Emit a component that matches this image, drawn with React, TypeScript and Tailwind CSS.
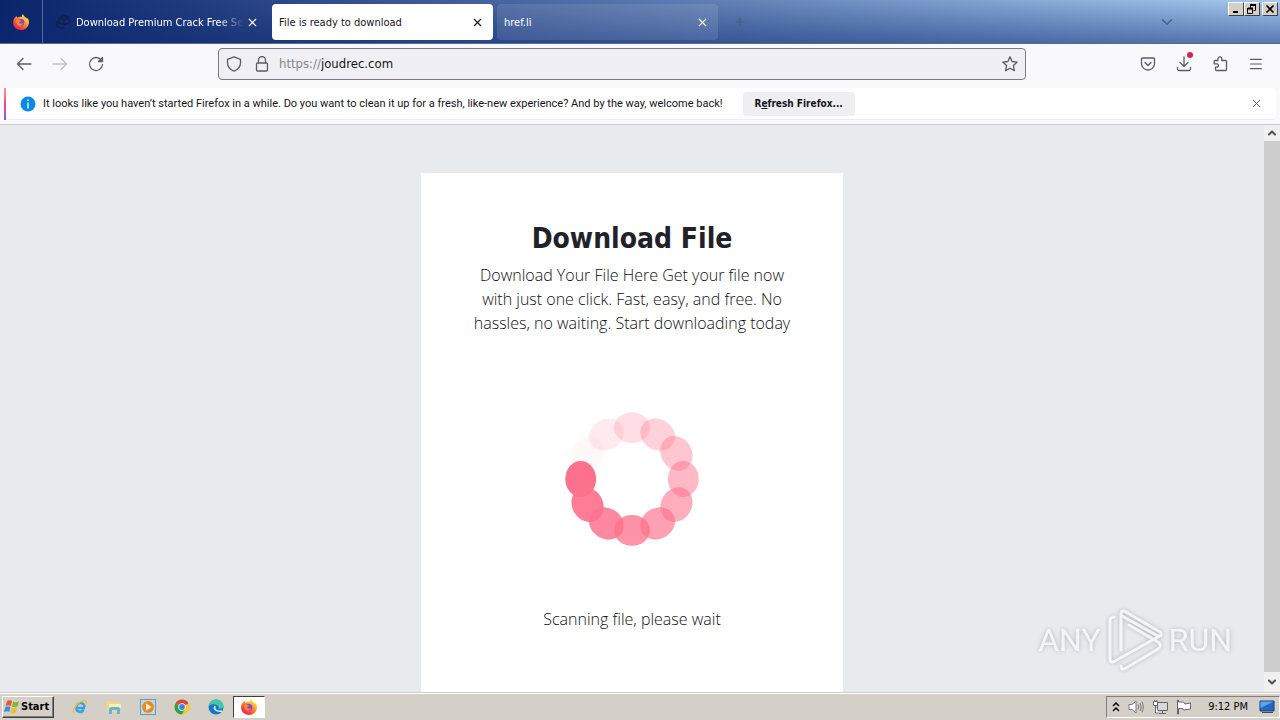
import type { ReactNode } from 'react';
import { ChevronDown, Menu, Plus, X } from 'lucide-react';

const tabs = [
  { title: 'Download Premium Crack Free Setup', favicon: true, active: false, style: 'text-white' },
  { title: 'File is ready to download', favicon: false, active: true, style: 'bg-white text-[#15141a] rounded' },
  { title: 'href.li', favicon: false, active: false, style: 'bg-white/10 text-white rounded' },
];

const spinnerDots = [0.23, 0.32, 0.41, 0.5, 0.58, 0.67, 0.76, 0.84, 0.92, 1, 0.05, 0.14];

function FirefoxLogo() {
  return (
    <svg viewBox="0 0 16 16" className="w-4 h-4" aria-hidden="true">
      <defs>
        <linearGradient id="ffBody" x1="0.9" y1="0.1" x2="0.2" y2="1">
          <stop offset="0" stopColor="#fff24a" />
          <stop offset="0.35" stopColor="#ffa52b" />
          <stop offset="0.7" stopColor="#ff4a3a" />
          <stop offset="1" stopColor="#e6186c" />
        </linearGradient>
      </defs>
      <path
        d="M10 0c-1 1-1.200 2-1 3-2-.6-3.600-.2-4.500.8C4 3.600 3.700 2.800 3.800 1.800 1.500 3.500 0 6 .1 9c.2 4 3.700 7 7.900 7 4.500 0 8-3.500 8-7.800 0-2-.8-3.600-1.900-4.700l.2 1.500C13 3 10.400 2.500 10 0z"
        fill="url(#ffBody)"
      />
      <circle cx="8" cy="8.500" r="3.400" fill="#8a45d8" />
      <path d="M3.200 6.200c1.500-1 3-.4 4.800.6-.4 1-1.600 1-2 1.700.4 1.400 2.500 1.600 4 .4-.4 2-2 3.200-3.800 2.800-2.100-.5-3.300-3-3-5.500z" fill="#ff8a1e" />
    </svg>
  );
}

function IconButton({ label, children }: { label: string; children: ReactNode }) {
  return (
    <button aria-label={label} className="w-9 h-8 flex items-center justify-center text-[#5b5b66]">
      {children}
    </button>
  );
}

/* 16px outline glyph used by the browser toolbar */
function Glyph({ d }: { d: string }) {
  return (
    <svg viewBox="0 0 16 16" className="w-4 h-4 shrink-0" fill="none" stroke="currentColor" strokeWidth="1.300" strokeLinecap="round" strokeLinejoin="round" aria-hidden="true">
      <path d={d} />
    </svg>
  );
}

function WindowButton({ label, children }: { label: string; children: ReactNode }) {
  return (
    <button
      aria-label={label}
      className="w-4 h-[14px] flex items-center justify-center bg-[#d4d0c8] border border-t-white border-l-white border-r-[#404040] border-b-[#404040]"
    >
      <svg viewBox="0 0 12 10" className="w-3 h-[10px]" fill="none" stroke="black" aria-hidden="true">
        {children}
      </svg>
    </button>
  );
}

function TitleBar() {
  return (
    <header className="h-11 shrink-0 flex items-start border-b border-[#5a6a8c] bg-[linear-gradient(to_bottom,transparent,rgba(10,40,115,0.5)),linear-gradient(to_right,#0a246a,#a6caf0)]">
      <div className="w-[43px] h-[43px] shrink-0 flex items-center justify-center border-r border-white/30">
        <FirefoxLogo />
      </div>
      <div role="tablist" className="flex gap-1 pt-1 pl-1">
        {tabs.map((tab) => (
          <div key={tab.title} className={`w-[221px] h-9 flex items-center pl-[7px] pr-2 ${tab.style}`}>
            {tab.favicon && (
              <svg viewBox="0 0 16 16" className="w-4 h-4 ml-px mr-[5px] shrink-0" fill="none" stroke="#102050" strokeWidth="1.500" aria-hidden="true">
                <path d="M4 4l5-2.500 5 2v5.500l-5 2-5-2zM4 4l5 2 5-2.500M9 6v5M2 7v5l4 2M1 9h3M5 14.500l5-1" />
              </svg>
            )}
            <button
              role="tab"
              aria-selected={tab.active}
              className={`flex-1 pt-px text-left text-[11px] leading-4 overflow-hidden whitespace-nowrap ${tab.favicon ? '[mask-image:linear-gradient(to_right,black_85%,transparent)]' : ''}`}
            >
              {tab.title}
            </button>
            <button aria-label="Close tab" className="w-4 h-4 shrink-0 flex items-center justify-center">
              <X size={13} strokeWidth={2} />
            </button>
          </div>
        ))}
      </div>
      <button aria-label="New tab" className="w-11 h-11 flex items-center justify-center text-[#4a5878]">
        <Plus size={14} strokeWidth={1.5} />
      </button>
      <div className="flex-1" />
      <button aria-label="List all tabs" className="w-9 h-11 flex items-center justify-center text-[#48618f]">
        <ChevronDown size={18} strokeWidth={2} />
      </button>
      <div className="flex pt-[2px] pl-[43px] pr-[2px]">
        <WindowButton label="Minimize">
          <path d="M3 8h5" strokeWidth="2" />
        </WindowButton>
        <WindowButton label="Restore">
          <path d="M4 1h5M2 4.500h5" strokeWidth="2" />
          <path d="M4.500 1v3M9.500 0v6.500H7.500M1.500 4v5.500h5V4" />
        </WindowButton>
        <div className="pl-[2px]">
          <WindowButton label="Close">
            <path d="M2.500 1.500l7 7M9.500 1.500l-7 7" strokeWidth="1.700" />
          </WindowButton>
        </div>
      </div>
    </header>
  );
}

function NavBar() {
  return (
    <nav className="h-11 shrink-0 flex items-start bg-[#f9f9fb] px-[6px] pt-1 text-[#5b5b66]">
      <div className="flex w-[212px] shrink-0">
        <IconButton label="Back">
          <Glyph d="M15 8H1.500M7 2.500L1.500 8 7 13.500" />
        </IconButton>
        <button aria-label="Forward" disabled className="w-9 h-8 flex items-center justify-center text-[#c0c0c6]">
          <Glyph d="M1 8h13.500M9 2.500L14.500 8 9 13.500" />
        </button>
        <IconButton label="Reload">
          <Glyph d="M13.500 4.500A6.500 6.500 0 1 0 14.500 8.500M14.500 1.500v4h-4z" />
        </IconButton>
      </div>
      <label className="flex-1 h-8 flex items-center px-[7px] rounded border border-[#7a7a82] bg-[#f0f0f4]">
        <Glyph d="M8 .8L1.500 3.300v3.200c0 4 2.500 7.200 6.500 8.700 4-1.500 6.500-4.700 6.500-8.700V3.300z" />
        <span className="w-3" />
        <Glyph d="M3.500 7h9a1 1 0 0 1 1 1v6a1 1 0 0 1-1 1h-9a1 1 0 0 1-1-1V8a1 1 0 0 1 1-1zM4.500 7V4a3.500 3.500 0 0 1 7 0v3" />
        <span className="pl-[9px] text-[13px] leading-4 text-[#85858e]">https://</span>
        <input aria-label="Address" defaultValue="joudrec.com" className="flex-1 min-w-0 bg-transparent outline-none text-[13px] leading-4 text-[#15141a]" />
        <button aria-label="Bookmark this page">
          <Glyph d="M8 .8l2.100 4.700 5.100.6-3.800 3.500 1 5.100L8 12.200l-4.400 2.500 1-5.100L.8 6.100l5.100-.6z" />
        </button>
      </label>
      <div className="flex w-[248px] shrink-0 justify-end">
        <IconButton label="Save to Pocket">
          <Glyph d="M2.500 2h11a1 1 0 0 1 1 1v4.500a6.500 6.500 0 0 1-13 0V3a1 1 0 0 1 1-1zM5 6.500l3 3 3-3" />
        </IconButton>
        <div className="relative">
          <IconButton label="Downloads">
            <Glyph d="M8 1v9.500M4 6.500l4 4 4-4M1.500 11.500V13A1.500 1.500 0 0 0 3 14.500h10a1.500 1.500 0 0 0 1.500-1.500v-1.500" />
          </IconButton>
          <span className="absolute top-1 right-[9px] w-[6px] h-[6px] rounded-full bg-[#d7264c]" />
        </div>
        <IconButton label="Extensions">
          <Glyph d="M6 4.500V2.700a1.900 1.900 0 0 1 3.800 0v1.800h3.700a1 1 0 0 1 1 1v8a1 1 0 0 1-1 1h-9a1 1 0 0 1-1-1v-2.300h1.300a1.700 1.700 0 0 0 0-3.400H2.200V5.500a1 1 0 0 1 1-1z" />
        </IconButton>
        <IconButton label="Menu">
          <Menu size={16} strokeWidth={1.8} />
        </IconButton>
      </div>
    </nav>
  );
}

function InfoBar() {
  return (
    <div className="shrink-0 px-1 pb-1 bg-[#f9f9fb] border-b border-[#cccccc]">
      <div role="status" className="h-8 flex items-center bg-white rounded border-b border-[#ececee] text-[#15141a]">
        <div className="w-[2px] h-8 bg-gradient-to-b from-[#ff9a5e] via-[#e83fa5] to-[#8a55d7]" />
        <svg viewBox="0 0 16 16" className="w-4 h-4 ml-[14px] mr-[7px] shrink-0" aria-hidden="true">
          <circle cx="8" cy="8" r="7.500" fill="#0a8ae6" />
          <path d="M8 3.500v1.500M8 6.500v6" stroke="white" strokeWidth="1.300" />
        </svg>
        <p className="text-[11px] leading-4 whitespace-nowrap [font-family:Roboto,sans-serif]">
          It looks like you haven’t started Firefox in a while. Do you want to clean it up for a fresh, like-new experience? And by the way, welcome back!
        </p>
        <button className="w-28 h-6 ml-5 rounded bg-[#efeff1] text-[10px] leading-4 font-bold whitespace-nowrap">
          R<span className="underline">e</span>fresh Firefox...
        </button>
        <div className="flex-1" />
        <button aria-label="Close notification" className="w-10 h-8 flex items-center justify-center text-[#5b5b66]">
          <X size={13} strokeWidth={1.8} />
        </button>
      </div>
    </div>
  );
}

function Spinner() {
  return (
    <svg viewBox="0 0 200 200" className="w-[200px] h-[200px]" role="img" aria-label="Loading">
      {spinnerDots.map((opacity, i) => (
        <ellipse key={i} cx="100" cy="48.700" rx="18" ry="15.400" fill="#fe718d" opacity={opacity} transform={`rotate(${i * 30} 100 100)`} />
      ))}
    </svg>
  );
}

function Watermark() {
  return (
    <div className="absolute right-[48px] bottom-[20px] flex items-center gap-[6px] text-[32px] leading-[64px] text-white/80 [font-family:Roboto,sans-serif] drop-shadow-[0_0_2px_rgba(110,120,130,0.6)]">
      <span>ANY</span>
      <svg viewBox="0 0 56 64" className="w-14 h-16" fill="none" stroke="white" strokeOpacity="0.8" strokeWidth="3" strokeLinejoin="round" strokeLinecap="round" aria-hidden="true">
        <path d="M14 42V6c0-3 2-4 5-2l34 20c2 2 1 5-2 4L15 8" />
        <path d="M7 9c-3 0-4 1-4 4v38c0 3 2 4 5 2l43-24M14 58c0 3 2 4 5 2l32-19c3-2 3-5 0-7L22 17" />
      </svg>
      <span>RUN</span>
    </div>
  );
}

function Page() {
  return (
    <div className="flex-1 min-h-0 flex relative bg-[#e8ebee]">
      <main className="flex-1 overflow-hidden pt-12 flex justify-center text-[#101014] [font-family:'Open_Sans',sans-serif]">
        <section className="w-[422px] min-h-[640px] shrink-0 bg-white px-12 pt-12 flex flex-col items-center text-center">
          <h1 className="text-[28px] leading-9 font-bold text-[#212129] [font-family:'DejaVu_Sans_Condensed','DejaVu_Sans',sans-serif]">Download File</h1>
          <p className="pt-[6px] text-base leading-6 font-light">
            Download Your File Here Get your file now
            <br />
            with just one click. Fast, easy, and free. No
            <br />
            hassles, no waiting. Start downloading today
          </p>
          <div className="pt-11 pb-7">
            <Spinner />
          </div>
          <p className="text-base leading-6 font-light">Scanning file, please wait</p>
        </section>
      </main>
      <div className="w-4 shrink-0 bg-[#f0f0f0] flex flex-col items-center text-[#505050]">
        <div className="h-4 flex items-center">
          <ChevronDown size={12} strokeWidth={4} className="rotate-180" />
        </div>
        <div className="flex-1 w-4 bg-[#cdcdcd]" />
        <div className="h-5 flex items-center">
          <ChevronDown size={12} strokeWidth={4} />
        </div>
      </div>
      <Watermark />
    </div>
  );
}

const launchers = [
  {
    name: 'Internet Explorer',
    art: (
      <>
        <path d="M13 9H4.500a3.500 3.500 0 0 0 6.800 1.500M4.500 8a4 4 0 0 1 8 0" fill="none" stroke="#35a4e6" strokeWidth="2.600" />
        <path d="M2 14C-.5 12 4 4 11 2c4-1 4 1 3 3" fill="none" stroke="#f0bf3a" strokeWidth="1.400" />
      </>
    ),
  },
  {
    name: 'Explorer',
    art: (
      <>
        <path d="M1 2h5l1 1.500h7V13H1z" fill="#f1d97b" />
        <path d="M3 5h12v4H3z" fill="#fbefb4" />
        <path d="M3 15v-5q0-2 2-2h7q2 0 2 2v5h-3v-4H6v4z" fill="#62b5dc" />
      </>
    ),
  },
  {
    name: 'Media Player',
    art: (
      <>
        <rect x=".5" y=".5" width="15" height="15" fill="#b8dcf3" stroke="#5d9bc8" />
        <circle cx="8" cy="8" r="6" fill="#f28a18" />
        <path d="M6 4.500L11.500 8 6 11.500z" fill="white" />
      </>
    ),
  },
  {
    name: 'Chrome',
    art: (
      <>
        <circle cx="8" cy="8" r="7.500" fill="#f6c927" />
        <path d="M8 8L1.500 4.250A7.500 7.500 0 0 1 14.500 4.250z" fill="#dd4433" />
        <path d="M8 8L1.500 4.250A7.500 7.500 0 0 0 8 15.500L11 10z" fill="#2da350" />
        <circle cx="8" cy="8" r="3.700" fill="white" />
        <circle cx="8" cy="8" r="2.900" fill="#3f7fe8" />
      </>
    ),
  },
  {
    name: 'Edge',
    art: (
      <>
        <circle cx="8" cy="8" r="7.500" fill="#1577c9" />
        <path d="M.7 7C1.500 2.500 5 .5 8.500.5c4 0 7 3 7 6 0 2.500-2 3.700-4.500 3.500C10 9.700 11 9 10.500 7.500 9.500 5 4 4 .7 7z" fill="#45c7a5" />
        <path d="M7 7c-1.500 3 1 6 7 5" fill="none" stroke="#dff1fa" strokeWidth="1.600" />
      </>
    ),
  },
];

function Taskbar() {
  return (
    <footer className="h-7 shrink-0 flex items-center bg-[#d4d0c8] border-t border-[#d4d0c8] shadow-[inset_0_1px_0_white] text-[11px] leading-4 text-black">
      <button className="h-[22px] w-[52px] ml-[2px] flex items-center gap-[1px] pl-[1px] text-[11px] font-bold border border-t-white border-l-white border-r-[#404040] border-b-[#404040] shadow-[inset_-1px_-1px_0_#808080]">
        <svg viewBox="0 0 16 16" className="w-4 h-4 shrink-0" aria-hidden="true">
          <path d="M3 2q2.500-1.500 5 0L6.800 7Q4.500 5.500 1.700 7z" fill="#e9572b" />
          <path d="M9 2.500q2.500 1.500 6 0L13.500 7.500q-3 1.500-5.500 0z" fill="#7fb83d" />
          <path d="M1.500 8Q4 6.700 6.500 8L5.300 13Q3 11.500 0 13z" fill="#3d8fd8" />
          <path d="M7.700 8.500q2.500 1.500 5.500 0L12 13.500q-3 1.500-5.500 0z" fill="#f3bd29" />
        </svg>
        Start
      </button>
      <div className="flex pl-[9px]">
        {launchers.map((app) => (
          <button key={app.name} aria-label={app.name} className="w-[34px] h-[22px] flex items-center justify-center">
            <svg viewBox="0 0 16 16" className="w-4 h-4" aria-hidden="true">
              {app.art}
            </svg>
          </button>
        ))}
        <button aria-label="Firefox" className="w-8 h-[22px] flex items-center justify-center bg-white border border-t-[#404040] border-l-[#404040] border-r-white border-b-white">
          <FirefoxLogo />
        </button>
      </div>
      <div className="flex-1" />
      <div className="h-[22px] flex items-center pl-[5px] pr-1 border border-t-[#808080] border-l-[#808080] border-r-white border-b-white">
        <button aria-label="Show hidden icons" className="w-2 h-4">
          <svg viewBox="0 0 8 16" className="w-2 h-4" fill="none" stroke="black" strokeWidth="1.500">
            <path d="M1 7l3-3 3 3M1 12l3-3 3 3" />
          </svg>
        </button>
        <div className="flex gap-2 pl-2" aria-hidden="true">
          <svg viewBox="0 0 16 16" className="w-4 h-4" fill="white" stroke="#77777a">
            <path d="M1 5.500h3L8 2v12l-4-3.500H1z" />
            <path d="M10 5.500q1.500 2.500 0 5M12 4q2.500 4 0 8M14 2.500q3 5.500 0 11" fill="none" />
          </svg>
          <svg viewBox="0 0 16 16" className="w-4 h-4" fill="#d8d8d8" stroke="#66666a">
            <path d="M5.500 3.500h10v8h-10zM7 14.500h7M10.500 12v2" />
            <path d="M1.500 2.500h4v4h-4zM2.500 1v1.500M4.500 1v1.500M3.500 7v7h3" fill="white" />
          </svg>
          <svg viewBox="0 0 16 16" className="w-4 h-4" fill="white" stroke="#66666a">
            <path d="M1.500 1v14h1V9.500h4l1 1.500 7-1V4L9 5 7.500 3h-5V1z" />
          </svg>
        </div>
        <time className="pl-4 pr-[11px] whitespace-nowrap">9:12 PM</time>
        <svg viewBox="0 0 16 16" className="w-4 h-4" aria-hidden="true">
          <path d="M1 2h14v10H1z" fill="#2368c4" stroke="#1b3a73" />
          <path d="M1.500 2.500h13L1.500 9z" fill="#5da4ec" />
          <path d="M3 13.500h11" stroke="#3c4a60" />
        </svg>
      </div>
    </footer>
  );
}

export default function App() {
  return (
    <div className="h-screen flex flex-col overflow-hidden [font-family:'DejaVu_Sans_Condensed','DejaVu_Sans',sans-serif]">
      <TitleBar />
      <NavBar />
      <InfoBar />
      <Page />
      <Taskbar />
    </div>
  );
}
